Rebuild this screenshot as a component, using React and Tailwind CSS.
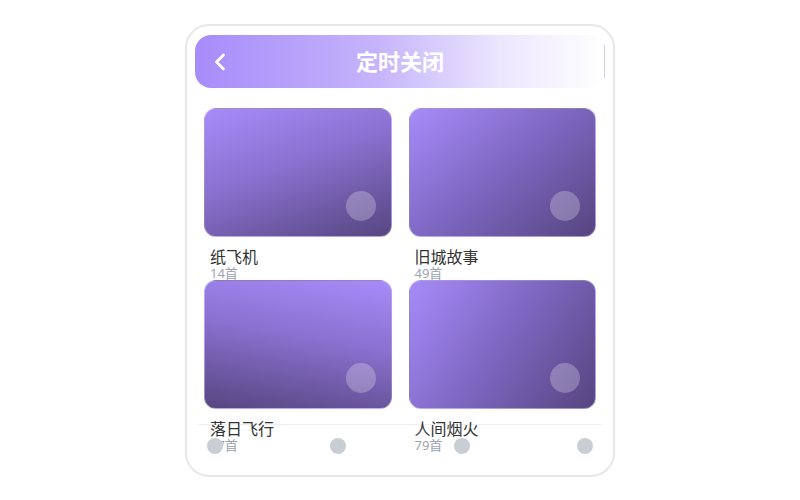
import { ChevronLeft } from 'lucide-react';

const playlists = [
  { name: '纸飞机', count: '14首', bg: 'bg-[linear-gradient(160deg,#a78bfa_0%,#8a70cf_45%,#574681_100%)]' },
  { name: '旧城故事', count: '49首', bg: 'bg-[linear-gradient(140deg,#a78bfa_0%,#7d66c0_50%,#564580_100%)]' },
  { name: '落日飞行', count: '47首', bg: 'bg-[linear-gradient(190deg,#a78bfa_0%,#8a70cf_45%,#574681_100%)]' },
  { name: '人间烟火', count: '79首', bg: 'bg-[linear-gradient(125deg,#a78bfa_0%,#7d66c0_50%,#564580_100%)]' },
];

function PlaylistCard({ item }) {
  return (
    <div className="flex flex-col">
      <div className={`relative h-[129px] rounded-[12px] border border-white/30 ${item.bg}`}>
        <div className="absolute right-[15px] bottom-[15px] h-[30px] w-[30px] rounded-full bg-white/25" />
      </div>
      <div className="relative z-10 mt-[11px] pl-[6px]">
        <div className="text-[16px] leading-[18px] text-[#333]">{item.name}</div>
        <div className="text-[13px] leading-[14px] text-[#9ca3af]">{item.count}</div>
      </div>
    </div>
  );
}

export default function App() {
  return (
    <div
      className="flex h-[500px] w-[800px] items-start justify-center bg-white pt-[24px]"
      style={{ fontFamily: '"Noto Sans", "Noto Sans CJK SC", sans-serif' }}
    >
      <div className="relative h-[453px] w-[430px] rounded-[24px] border-2 border-[#e5e7eb] bg-white px-[8px] pt-[9px]">
        <div className="absolute left-[11px] right-[11px] top-[398px] h-px bg-[#eeeff2]" />

        <div className="relative flex h-[53px] items-center rounded-[16px] bg-[linear-gradient(90deg,#a78bfa_0%,#c6b5fb_45%,#ede7fe_75%,#ffffff_100%)] px-[11px]">
          <ChevronLeft className="h-[28px] w-[28px] text-white" strokeWidth={2.4} />
          <div className="absolute inset-0 flex items-center justify-center text-[22px] font-bold text-white">
            定时关闭
          </div>
          <div className="absolute right-0 top-[10px] h-[33px] w-px bg-[#d4c8fb]" />
        </div>

        <div className="grid grid-cols-2 gap-x-[17px] px-[9px] pt-[20px]">
          {playlists.map((item) => (
            <div key={item.name} className="h-[172px]">
              <PlaylistCard item={item} />
            </div>
          ))}
        </div>

        <div className="absolute left-[11px] right-[11px] top-[412px] z-20 flex justify-between px-[9px]">
          {[0, 1, 2, 3].map((i) => (
            <div key={i} className="h-[16px] w-[16px] rounded-full bg-[#c9cdd4]" />
          ))}
        </div>
      </div>
    </div>
  );
}
